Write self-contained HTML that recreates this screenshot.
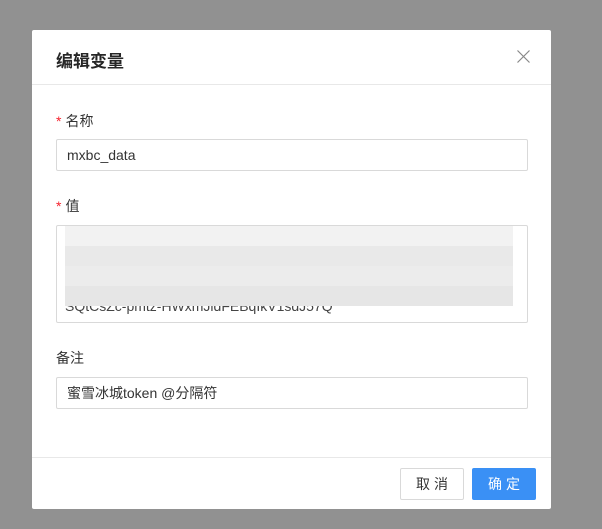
<!DOCTYPE html>
<html><head><meta charset="utf-8"><style>
body{margin:0;width:602px;height:529px;background:#919191;position:relative;overflow:hidden;font-family:"Liberation Sans","Noto Sans CJK SC",sans-serif;color:#333}
.m{position:absolute;left:32px;top:30px;width:519px;height:479px;background:#fff;border-radius:2px}
.hd{position:absolute;left:0;top:0;width:519px;height:54px;border-bottom:1px solid #e8e8e8}
.t{position:absolute;left:24px;top:17px;font-size:17px;font-weight:bold;color:#262626}
.x{position:absolute;left:485px;top:20px}
.lb{position:absolute;left:24px;font-size:14px;color:#333}
.lb i{color:#f5222d;font-style:normal;margin-right:4px}
.in{position:absolute;left:24px;width:472px;border:1px solid #d9d9d9;border-radius:2px;font-size:14px;box-sizing:border-box;padding-left:10px}
.ft{position:absolute;left:0;top:427px;width:519px;border-top:1px solid #e8e8e8}
.b{position:absolute;top:438px;width:64px;height:32px;box-sizing:border-box;border-radius:2px;font-size:14px;text-align:center;line-height:30px;letter-spacing:4px;text-indent:4px}
</style></head><body>
<div class="m">
<div class="hd"><div class="t">编辑变量</div>
<svg class="x" width="13" height="13" viewBox="0 0 13 13"><path d="M0.5 0.5L12.5 12.5M12.5 0.5L0.5 12.5" stroke="#888" stroke-width="1.2"/></svg></div>
<div class="lb" style="top:81px"><i>*</i>名称</div>
<div class="in" style="top:109px;height:32px;line-height:30px">mxbc_data</div>
<div class="lb" style="top:166px"><i>*</i>值</div>
<div class="in" style="top:195px;height:98px;overflow:hidden">
<div style="position:absolute;left:8px;top:72px;font-size:14px;color:#444">SQtCsZc-pmtz-HWxmJldFEBqIkV1sdJ57Q</div>
<div style="position:absolute;left:8px;top:0;width:448px;height:80px;background:
linear-gradient(#f2f2f2 0 20px,#e9e9e9 20px 40px,#ececec 40px 60px,#e6e6e6 60px 80px)"></div>
</div>
<div class="lb" style="top:318px">备注</div>
<div class="in" style="top:347px;height:32px;line-height:30px">蜜雪冰城token @分隔符</div>
<div class="ft"></div>
<div class="b" style="left:368px;border:1px solid #d9d9d9;color:#333">取消</div>
<div class="b" style="left:440px;background:#3a90f5;color:#fff;line-height:32px">确定</div>
</div>
</body></html>
